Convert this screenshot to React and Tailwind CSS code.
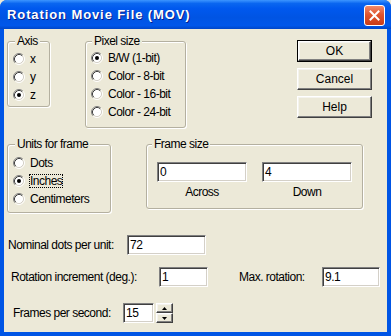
const sunken =
  'bg-white border border-t-[#808080] border-l-[#808080] border-r-white border-b-white shadow-[inset_1px_1px_0_#404040,inset_-1px_-1px_0_#d4d0c8] pl-[2px] text-[12px] leading-[16px] flex items-center'

const raised =
  'bg-[#ece9d8] border border-t-white border-l-white border-r-[#404040] border-b-[#404040] shadow-[inset_-1px_-1px_0_#808080,inset_1px_1px_0_#f4f3ee]'

function Radio({ checked }) {
  return (
    <svg width="12" height="12" viewBox="0 0 12 12" className="shrink-0">
      <circle cx="6" cy="6" r="4.5" fill="#fff" />
      <path d="M2.11 9.89 A5.5 5.5 0 0 1 9.89 2.11" stroke="#808080" fill="none" />
      <path d="M9.89 2.11 A5.5 5.5 0 0 1 2.11 9.89" stroke="#fff" fill="none" />
      <path d="M2.82 9.18 A4.5 4.5 0 0 1 9.18 2.82" stroke="#404040" fill="none" />
      <path d="M9.18 2.82 A4.5 4.5 0 0 1 2.82 9.18" stroke="#d4d0c8" fill="none" />
      {checked && <circle cx="6" cy="6" r="2" fill="#000" />}
    </svg>
  )
}

function RadioRow({ label, checked, focus }) {
  return (
    <div className="flex items-center h-[18px] pl-[5px]">
      <Radio checked={checked} />
      {focus ? (
        <span className="ml-[4px] border border-dotted border-black leading-[12px]">{label}</span>
      ) : (
        <span className="ml-[5px] leading-[14px]">{label}</span>
      )}
    </div>
  )
}

function Group({ title, legendClass, className, children }) {
  return (
    <fieldset
      className={`border border-[#b4b0a0] rounded-[3px] shadow-[1px_1px_0_#fff,inset_1px_1px_0_#fff] ${className}`}
    >
      <legend className={`px-[2px] leading-[14px] bg-[#ece9d8] ${legendClass}`}>{title}</legend>
      {children}
    </fieldset>
  )
}

function Button({ children, isDefault }) {
  if (isDefault) {
    return (
      <div className="border border-black w-[75px] h-[22px] flex">
        <div className={`${raised} flex-1 flex items-center justify-center`}>{children}</div>
      </div>
    )
  }
  return (
    <div className={`${raised} w-[75px] h-[22px] flex items-center justify-center`}>{children}</div>
  )
}

export default function App() {
  return (
    <div className="w-[391px] h-[336px] bg-[#ece9d8]">
      <div className="w-[391px] h-[336px] flex flex-col bg-[#0055e5] rounded-t-[7px] overflow-hidden font-['Liberation_Sans',Arial,sans-serif] text-[12px] tracking-[-0.5px] text-black">
        {/* title bar */}
        <div className="h-[29px] shrink-0 flex items-center pl-[7px] pr-[6px] bg-[linear-gradient(180deg,#3d95ff_0%,#0a66f0_12%,#0058ee_30%,#0054e3_60%,#0057ea_88%,#0046c8_100%)]">
          <span className="text-white font-bold text-[13px] tracking-[0.9px] leading-[16px] [text-shadow:1px_1px_0_#0a1e8c]">
            Rotation Movie File (MOV)
          </span>
          <div className="ml-auto mt-[1px] w-[21px] h-[21px] rounded-[3px] border border-white bg-[linear-gradient(180deg,#f08a6a_0%,#e0552f_45%,#c93b17_100%)] flex items-center justify-center">
            <svg width="11" height="11" viewBox="0 0 11 11">
              <path d="M1.5 1.5 L9.5 9.5 M9.5 1.5 L1.5 9.5" stroke="#fff" strokeWidth="2" strokeLinecap="square" />
            </svg>
          </div>
        </div>

        {/* client area */}
        <div className="flex-1 mx-[4px] mb-[4px] bg-[#ece9d8] flex flex-col">
          <div className="flex items-start pt-[5px]">
            <Group title="Axis" legendClass="ml-[7px]" className="ml-[3px] w-[43px] pt-[2px] pb-[2px]">
              <RadioRow label="x" />
              <RadioRow label="y" />
              <RadioRow label="z" checked />
            </Group>
            <Group title="Pixel size" legendClass="ml-[6px]" className="ml-[35px] w-[101px] pt-[1px] pb-[6px]">
              <RadioRow label="B/W (1-bit)" checked />
              <RadioRow label="Color - 8-bit" />
              <RadioRow label="Color - 16-bit" />
              <RadioRow label="Color - 24-bit" />
            </Group>
            <div className="ml-auto mr-[15px] mt-[6px] flex flex-col gap-[6px] tracking-normal">
              <Button isDefault>OK</Button>
              <Button>Cancel</Button>
              <Button>Help</Button>
            </div>
          </div>

          <div className="flex items-start mt-[9px]">
            <Group title="Units for frame" legendClass="ml-[7px]" className="ml-[3px] w-[104px] pt-[3px] pb-[4px]">
              <RadioRow label="Dots" />
              <RadioRow label="Inches" checked focus />
              <RadioRow label="Centimeters" />
            </Group>
            <Group title="Frame size" legendClass="ml-[5px]" className="ml-[35px] w-[217px] pb-[9px]">
              <div className="flex gap-[15px] pl-[10px] mt-[11px]">
                <div className="flex flex-col w-[90px]">
                  <div className={`${sunken} h-[20px]`}>0</div>
                  <div className="mt-[3px] text-center leading-[14px]">Across</div>
                </div>
                <div className="flex flex-col w-[90px]">
                  <div className={`${sunken} h-[20px]`}>4</div>
                  <div className="mt-[3px] text-center leading-[14px]">Down</div>
                </div>
              </div>
            </Group>
          </div>

          <div className="flex items-center mt-[22px]">
            <span className="w-[123px] pl-[4px]">Nominal dots per unit:</span>
            <div className={`${sunken} w-[79px] h-[20px]`}>72</div>
          </div>

          <div className="flex items-center mt-[12px]">
            <span className="w-[155px] pl-[7px]">Rotation increment (deg.):</span>
            <div className={`${sunken} w-[49px] h-[20px]`}>1</div>
            <span className="w-[83px] ml-[31px]">Max. rotation:</span>
            <div className={`${sunken} w-[58px] h-[20px]`}>9.1</div>
          </div>

          <div className="flex items-center mt-[16px]">
            <span className="w-[119px] pl-[9px]">Frames per second:</span>
            <div className={`${sunken} w-[31px] h-[20px]`}>15</div>
            <div className="ml-[2px] flex flex-col w-[17px] h-[20px]">
              <div className={`${raised} h-[10px] flex items-center justify-center`}>
                <svg width="5" height="3" viewBox="0 0 5 3">
                  <path d="M2.5 0 L5 3 L0 3 Z" fill="#000" />
                </svg>
              </div>
              <div className={`${raised} h-[10px] flex items-center justify-center`}>
                <svg width="5" height="3" viewBox="0 0 5 3">
                  <path d="M0 0 L5 0 L2.5 3 Z" fill="#000" />
                </svg>
              </div>
            </div>
          </div>
        </div>
      </div>
    </div>
  )
}
